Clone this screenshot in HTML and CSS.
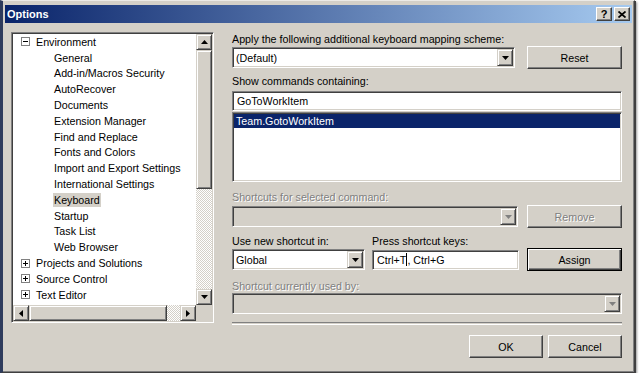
FILE: index.html
```html
<!DOCTYPE html>
<html lang="en">
<head>
    <meta charset="UTF-8">
    <title>Options</title>
    <link rel="stylesheet" href="styles.css">
</head>
<body>

<div class="window">
    <div class="titlebar">
        <span class="title">Options</span>
        <div class="caption-btns">
            <span class="cap-btn help">?</span>
            <span class="cap-btn">
                <svg width="8" height="7" viewBox="0 0 8 7"><path d="M0.5 0.5l7 6M7.5 0.5l-7 6" stroke="#000" stroke-width="1.7"/></svg>
            </span>
        </div>
    </div>

    <div class="content">
        <!-- left: settings tree -->
        <div class="tree">
            <div class="tree-list">
                <div class="node">
                    <svg class="exp" width="9" height="9"><rect x=".5" y=".5" width="8" height="8" fill="#fff" stroke="#808080"/><path d="M2 4.5h5" stroke="#000"/></svg>
                    <span class="lbl">Environment</span>
                </div>
                <div class="node child"><span class="lbl">General</span></div>
                <div class="node child"><span class="lbl">Add-in/Macros Security</span></div>
                <div class="node child"><span class="lbl">AutoRecover</span></div>
                <div class="node child"><span class="lbl">Documents</span></div>
                <div class="node child"><span class="lbl">Extension Manager</span></div>
                <div class="node child"><span class="lbl">Find and Replace</span></div>
                <div class="node child"><span class="lbl">Fonts and Colors</span></div>
                <div class="node child"><span class="lbl">Import and Export Settings</span></div>
                <div class="node child"><span class="lbl">International Settings</span></div>
                <div class="node child"><span class="lbl sel">Keyboard</span></div>
                <div class="node child"><span class="lbl">Startup</span></div>
                <div class="node child"><span class="lbl">Task List</span></div>
                <div class="node child"><span class="lbl">Web Browser</span></div>
                <div class="node">
                    <svg class="exp" width="9" height="9"><rect x=".5" y=".5" width="8" height="8" fill="#fff" stroke="#808080"/><path d="M2 4.5h5M4.5 2v5" stroke="#000"/></svg>
                    <span class="lbl">Projects and Solutions</span>
                </div>
                <div class="node">
                    <svg class="exp" width="9" height="9"><rect x=".5" y=".5" width="8" height="8" fill="#fff" stroke="#808080"/><path d="M2 4.5h5M4.5 2v5" stroke="#000"/></svg>
                    <span class="lbl">Source Control</span>
                </div>
                <div class="node">
                    <svg class="exp" width="9" height="9"><rect x=".5" y=".5" width="8" height="8" fill="#fff" stroke="#808080"/><path d="M2 4.5h5M4.5 2v5" stroke="#000"/></svg>
                    <span class="lbl">Text Editor</span>
                </div>
            </div>
            <div class="vscroll">
                <span class="sb-btn"><svg width="7" height="4"><path d="M3.5 0L7 4H0z"/></svg></span>
                <span class="vthumb"></span>
                <span class="track"></span>
                <span class="sb-btn"><svg width="7" height="4"><path d="M0 0h7L3.5 4z"/></svg></span>
            </div>
            <div class="hscroll">
                <span class="sb-btn"><svg width="4" height="7"><path d="M4 0v7L0 3.5z"/></svg></span>
                <span class="hthumb"></span>
                <span class="track"></span>
                <span class="sb-btn"><svg width="4" height="7"><path d="M0 0l4 3.5L0 7z"/></svg></span>
            </div>
            <div class="corner"></div>
        </div>

        <!-- right: keyboard page -->
        <div class="right">
            <div class="label first">Apply the following additional keyboard mapping scheme:</div>
            <div class="row">
                <div class="combo scheme">
                    <span class="combo-text">(Default)</span>
                    <span class="combo-btn"><svg width="7" height="4"><path d="M0 0h7L3.5 4z"/></svg></span>
                </div>
                <button class="btn side">Reset</button>
            </div>

            <div class="label gap-s">Show commands containing:</div>
            <div class="field search">GoToWorkItem</div>
            <div class="listbox">
                <div class="list-item selected">Team.GotoWorkItem</div>
            </div>

            <div class="label disabled gap-m">Shortcuts for selected command:</div>
            <div class="row row-tight">
                <div class="combo off shortcuts">
                    <span class="combo-text"></span>
                    <span class="combo-btn"><svg width="7" height="4"><path d="M0 0h7L3.5 4z"/></svg></span>
                </div>
                <button class="btn side" disabled>Remove</button>
            </div>

            <div class="label-row">
                <span class="label scope-label">Use new shortcut in:</span>
                <span class="label">Press shortcut keys:</span>
            </div>
            <div class="row">
                <div class="combo scope">
                    <span class="combo-text">Global</span>
                    <span class="combo-btn"><svg width="7" height="4"><path d="M0 0h7L3.5 4z"/></svg></span>
                </div>
                <div class="field keys">Ctrl+T<span class="caret"></span>, Ctrl+G</div>
                <button class="btn side default">Assign</button>
            </div>

            <div class="label disabled gap-m">Shortcut currently used by:</div>
            <div class="combo off used-by">
                <span class="combo-text"></span>
                <span class="combo-btn"><svg width="7" height="4"><path d="M0 0h7L3.5 4z"/></svg></span>
            </div>

            <div class="separator"></div>
        </div>

        <div class="footer">
            <button class="btn">OK</button>
            <button class="btn">Cancel</button>
        </div>
    </div>
</div>

</body>
</html>
```

FILE: styles.css
```css
body {
    margin: 0;
    background-color: #ffffff;
    font-family: "Liberation Sans", Arial, sans-serif;
    font-size: 10.7px;
    color: #000;
}
.window {
    width: 635px;
    height: 373px;
    box-sizing: border-box;
    background-color: #d4d0c8;
    border: 1px solid;
    border-color: #eceae6 #404040 #404040 #2e3b5c;
    border-left-width: 3px;
    padding: 4px 2px 0 2px;
    box-shadow: inset -1px -1px #808080, 1px 1px 0 #404040, 2px 2px 2px rgba(0, 0, 0, 0.4);
}
.titlebar {
    height: 18px;
    display: flex;
    align-items: center;
    justify-content: space-between;
    padding: 0 2px 0 2px;
    background: linear-gradient(to right, #0a246a, #a6caf0);
}
.title {
    color: #fff;
    font-weight: bold;
    font-size: 11px;
}
.caption-btns {
    display: flex;
    gap: 2px;
}
.cap-btn {
    width: 16px;
    height: 14px;
    box-sizing: border-box;
    background-color: #d4d0c8;
    border: 1px solid;
    border-color: #fff #404040 #404040 #fff;
    box-shadow: inset -1px -1px #808080;
    display: flex;
    align-items: center;
    justify-content: center;
}
.cap-btn.help {
    font-weight: bold;
    font-size: 11px;
    line-height: 12px;
}

.content {
    display: grid;
    grid-template-columns: 203px 390px;
    column-gap: 18px;
    padding: 9px 0 0 6px;
}

/* tree */
.tree {
    height: 291px;
    box-sizing: border-box;
    border: 1px solid;
    border-color: #808080 #fff #fff #808080;
    box-shadow: inset 1px 1px #404040, inset -1px -1px #d4d0c8;
    padding: 1px;
    display: grid;
    grid-template-columns: 183px 16px;
    grid-template-rows: 271px 16px;
}
.tree-list {
    background-color: #fff;
    overflow: hidden;
}
.node {
    height: 15.8px;
    display: flex;
    align-items: center;
    padding-left: 8px;
    white-space: nowrap;
}
.node.child {
    padding-left: 40px;
}
.exp {
    flex: none;
    margin-right: 5px;
}
.lbl {
    padding: 0 1px;
    line-height: 14px;
}
.lbl.sel {
    background-color: #d4d0c8;
}
.vscroll, .hscroll {
    display: flex;
    background: repeating-conic-gradient(#fff 0 25%, #d4d0c8 0 50%) 0 0 / 2px 2px;
}
.vscroll {
    flex-direction: column;
}
.sb-btn, .vthumb, .hthumb {
    flex: none;
    box-sizing: border-box;
    background-color: #d4d0c8;
    border: 1px solid;
    border-color: #d4d0c8 #404040 #404040 #d4d0c8;
    box-shadow: inset 1px 1px #fff, inset -1px -1px #808080;
}
.sb-btn {
    width: 16px;
    height: 16px;
    display: flex;
    align-items: center;
    justify-content: center;
}
.vthumb {
    height: 139px;
}
.hthumb {
    width: 138px;
}
.track {
    flex: 1;
}
.corner {
    background-color: #d4d0c8;
}

/* right side */
.right {
    display: flex;
    flex-direction: column;
}
.label {
    height: 13px;
    line-height: 13px;
    white-space: nowrap;
}
.label.first {
    margin-top: 1px;
}
.label.disabled {
    color: #808080;
    text-shadow: 1px 1px #fff;
}
.gap-s {
    margin-top: 6px;
}
.gap-m {
    margin-top: 9px;
}
.row {
    height: 23px;
    display: flex;
    align-items: center;
    justify-content: space-between;
}
.row-tight {
    margin-top: 1px;
}
.label-row {
    display: flex;
    margin-top: 7px;
}
.scope-label {
    width: 140px;
}

.combo {
    height: 21px;
    box-sizing: border-box;
    display: flex;
    background-color: #fff;
    border: 1px solid;
    border-color: #808080 #fff #fff #808080;
    box-shadow: inset 1px 1px #404040, inset -1px -1px #d4d0c8;
    padding: 1px;
}
.combo.off {
    background-color: #d4d0c8;
}
.combo.scheme {
    width: 283px;
}
.combo.shortcuts {
    width: 286px;
}
.combo.scope {
    width: 133px;
}
.combo.used-by {
    width: 390px;
}
.combo-text {
    flex: 1;
    display: flex;
    align-items: center;
    padding-left: 2px;
}
.combo-btn {
    width: 16px;
    box-sizing: border-box;
    display: flex;
    align-items: center;
    justify-content: center;
    background-color: #d4d0c8;
    border: 1px solid;
    border-color: #d4d0c8 #404040 #404040 #d4d0c8;
    box-shadow: inset 1px 1px #fff, inset -1px -1px #808080;
}
.combo.off .combo-btn svg {
    fill: #808080;
}

.field {
    height: 20px;
    box-sizing: border-box;
    display: flex;
    align-items: center;
    background-color: #fff;
    border: 1px solid;
    border-color: #808080 #fff #fff #808080;
    box-shadow: inset 1px 1px #404040, inset -1px -1px #d4d0c8;
    padding: 0 4px;
    white-space: pre;
}
.field.search {
    margin-top: 3px;
}
.field.keys {
    width: 147px;
    margin: 0 8px 0 7px;
}
.caret {
    display: inline-block;
    width: 1px;
    height: 13px;
    background-color: #000;
}
.listbox {
    height: 70px;
    box-sizing: border-box;
    margin-top: 1px;
    background-color: #fff;
    border: 1px solid;
    border-color: #808080 #fff #fff #808080;
    box-shadow: inset 1px 1px #404040, inset -1px -1px #d4d0c8;
    padding: 1px;
}
.list-item {
    height: 14px;
    line-height: 14px;
    padding-left: 2px;
}
.list-item.selected {
    background-color: #0a246a;
    color: #fff;
}
.separator {
    margin-top: 8px;
    height: 1px;
    border-top: 1px solid #808080;
    border-bottom: 1px solid #fff;
}

.btn {
    width: 74px;
    height: 23px;
    box-sizing: border-box;
    padding: 0;
    font-family: inherit;
    font-size: 10.7px;
    color: #000;
    background-color: #d4d0c8;
    border: 1px solid;
    border-color: #fff #404040 #404040 #fff;
    box-shadow: inset -1px -1px #808080, inset 1px 1px #d4d0c8;
}
.btn.side {
    width: 95px;
}
.btn.default {
    border-color: #000;
    box-shadow: inset 1px 1px #fff, inset -1px -1px #404040, inset -2px -2px #808080;
}
.btn:disabled {
    color: #808080;
    text-shadow: 1px 1px #fff;
}
.footer {
    grid-column: 1 / -1;
    display: flex;
    justify-content: flex-end;
    gap: 5px;
    margin-top: 10px;
}
```
